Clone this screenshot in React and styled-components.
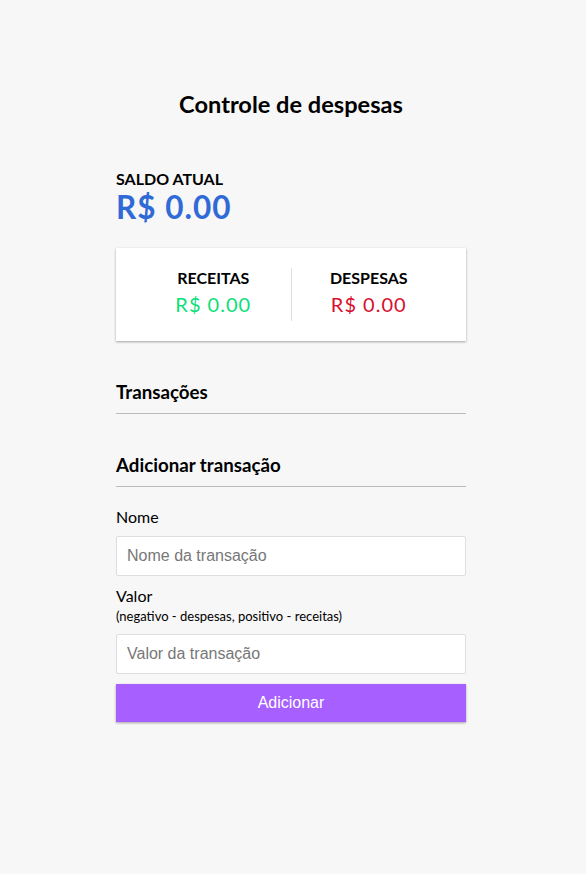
import React from "react";
import styled, { createGlobalStyle } from "styled-components";

const GlobalStyle = createGlobalStyle`
  * {
    box-sizing: border-box;
  }
  body {
    margin: 0;
    background-color: #f7f7f7;
    font-family: Lato, "Noto Sans", sans-serif;
  }
`;

const shadow = "0 1px 3px rgba(0, 0, 0, 0.12), 0 1px 2px rgba(0, 0, 0, 0.24)";

const Page = styled.div`
  display: flex;
  justify-content: center;
  padding: 90px 4px 40px 0;
`;

const Container = styled.div`
  width: 350px;
`;

const Title = styled.h2`
  margin: 0 0 51px;
  font-size: 23.6px;
  font-weight: 700;
  text-align: center;
`;

const Caption = styled.h4`
  margin: 0;
  font-size: 16px;
  font-weight: 700;
  text-transform: uppercase;
`;

const Balance = styled.h1`
  margin: 0;
  font-size: 31.5px;
  font-weight: 700;
  letter-spacing: 1px;
  color: #2f6ad6;
`;

const Summary = styled.div`
  display: flex;
  margin: 22px 0 20px;
  padding: 20px;
  background-color: #fff;
  box-shadow: ${shadow};
`;

const SummaryCol = styled.div`
  flex: 1;
  text-align: center;
  border-right: ${(p) => (p.$divider ? "1px solid #dedede" : "none")};
`;

const Money = styled.p`
  margin: 5px 0;
  font-size: 20px;
  letter-spacing: 1px;
  color: ${(p) => (p.$minus ? "#d7102f" : "#0ce07a")};
`;

const Section = styled.h3`
  margin: 40px 0 10px;
  padding-bottom: 10px;
  font-size: 18.72px;
  font-weight: 700;
  border-bottom: 1px solid #bbb;
`;

const List = styled.ul`
  list-style: none;
  margin: 0 0 40px;
  padding: 0;
`;

const Field = styled.div``;

const Label = styled.label`
  display: inline-block;
  margin: 10px 0;
  font-size: 16px;
`;

const Hint = styled.small`
  font-size: 13px;
`;

const Input = styled.input`
  display: block;
  width: 100%;
  padding: 10px;
  font-family: "Liberation Sans", Arial, sans-serif;
  font-size: 16px;
  border: 1px solid #dedede;
  border-radius: 2px;
  background: #fff;

  &::placeholder {
    color: #777;
  }
`;

const Button = styled.button`
  display: block;
  width: 100%;
  margin: 10px 0 30px;
  padding: 10px;
  border: 0;
  cursor: pointer;
  font-family: "Liberation Sans", Arial, sans-serif;
  font-size: 16px;
  color: #fff;
  background-color: #a760ff;
  box-shadow: ${shadow};
`;

export default function App() {
  return (
    <>
      <GlobalStyle />
      <Page>
        <Container>
          <Title>Controle de despesas</Title>
          <Caption>Saldo atual</Caption>
          <Balance>R$ 0.00</Balance>
          <Summary>
            <SummaryCol $divider>
              <Caption>Receitas</Caption>
              <Money>R$ 0.00</Money>
            </SummaryCol>
            <SummaryCol>
              <Caption>Despesas</Caption>
              <Money $minus>R$ 0.00</Money>
            </SummaryCol>
          </Summary>
          <Section>Transações</Section>
          <List />
          <Section>Adicionar transação</Section>
          <form onSubmit={(e) => e.preventDefault()}>
            <Field>
              <Label htmlFor="nome">Nome</Label>
              <Input id="nome" type="text" placeholder="Nome da transação" />
            </Field>
            <Field>
              <Label htmlFor="valor">
                Valor <br />
                <Hint>(negativo - despesas, positivo - receitas)</Hint>
              </Label>
              <Input id="valor" type="number" placeholder="Valor da transação" />
            </Field>
            <Button>Adicionar</Button>
          </form>
        </Container>
      </Page>
    </>
  );
}
